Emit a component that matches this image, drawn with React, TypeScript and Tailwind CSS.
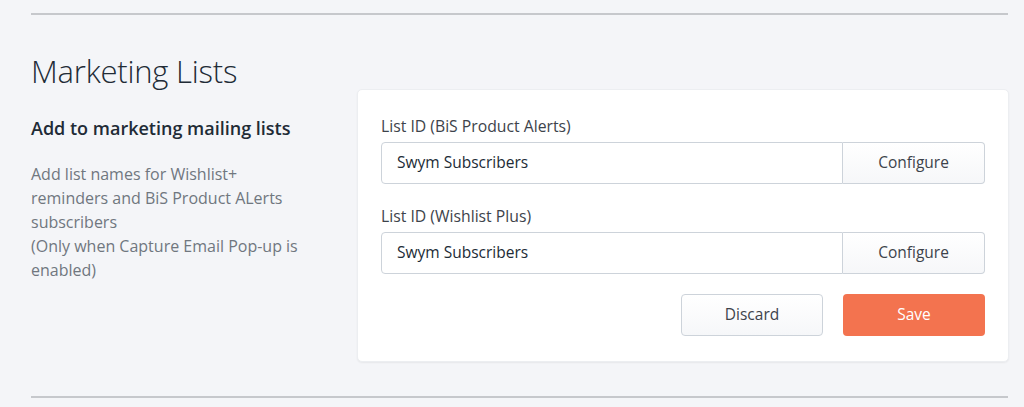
import React from "react";

const font = { fontFamily: '"Open Sans", "Noto Sans", Arial, sans-serif' };

function Field({ label, value }: { label: string; value: string }) {
  return (
    <div className="mb-5">
      <div className="text-[15.75px] leading-6 text-[#3d434b] mb-[4px]">{label}</div>
      <div className="flex h-[42px]">
        <div className="flex-1 flex items-center border border-[#cdd3da] rounded-l-[4px] bg-white pl-[15px] text-[15.5px] text-[#212b36]">
          {value}
        </div>
        <button className="w-[142px] border border-l-0 border-[#cdd3da] rounded-r-[4px] bg-gradient-to-b from-white to-[#f6f7f9] text-[15.5px] text-[#3d434b]">
          Configure
        </button>
      </div>
    </div>
  );
}

export default function App() {
  return (
    <div style={font} className="w-[1024px] h-[407px] bg-[#f4f5f8] pt-[13px] pl-[31px] pr-[16px] overflow-hidden">
      <div className="h-[2px] bg-[#c6c8cc]" />
      <h1 className="mt-[38px] text-[31px] leading-[36px] font-light text-[#212b36] tracking-[-0.2px]">
        Marketing Lists
      </h1>
      <div className="flex items-start">
        <div className="w-[326px] shrink-0 pt-[27px] pr-[51px]">
          <div className="text-[18px] leading-6 font-semibold text-[#212b36]">
            Add to marketing mailing lists
          </div>
          <p className="mt-[22px] text-[16px] leading-6 text-[#70777f]">
            Add list names for Wishlist+ reminders and BiS Product ALerts subscribers
            <br />
            (Only when Capture Email Pop-up is enabled)
          </p>
        </div>
        <div className="flex-1 mr-[-1px] bg-white rounded-[5px] border border-[#eceef1] shadow-[0_1px_2px_rgba(0,0,0,0.06)] px-[23px] pt-[24px] pb-[25px]">
          <Field label="List ID (BiS Product Alerts)" value="Swym Subscribers" />
          <Field label="List ID (Wishlist Plus)" value="Swym Subscribers" />
          <div className="flex justify-end gap-[20px]">
            <button className="w-[142px] h-[42px] border border-[#cdd3da] rounded-[4px] bg-gradient-to-b from-white to-[#f6f7f9] text-[15.5px] text-[#3d434b]">
              Discard
            </button>
            <button className="w-[142px] h-[42px] rounded-[4px] bg-[#f3734f] text-[15.5px] text-white">
              Save
            </button>
          </div>
        </div>
      </div>
      <div className="mt-[34px] h-[2px] bg-[#c6c8cc]" />
    </div>
  );
}
